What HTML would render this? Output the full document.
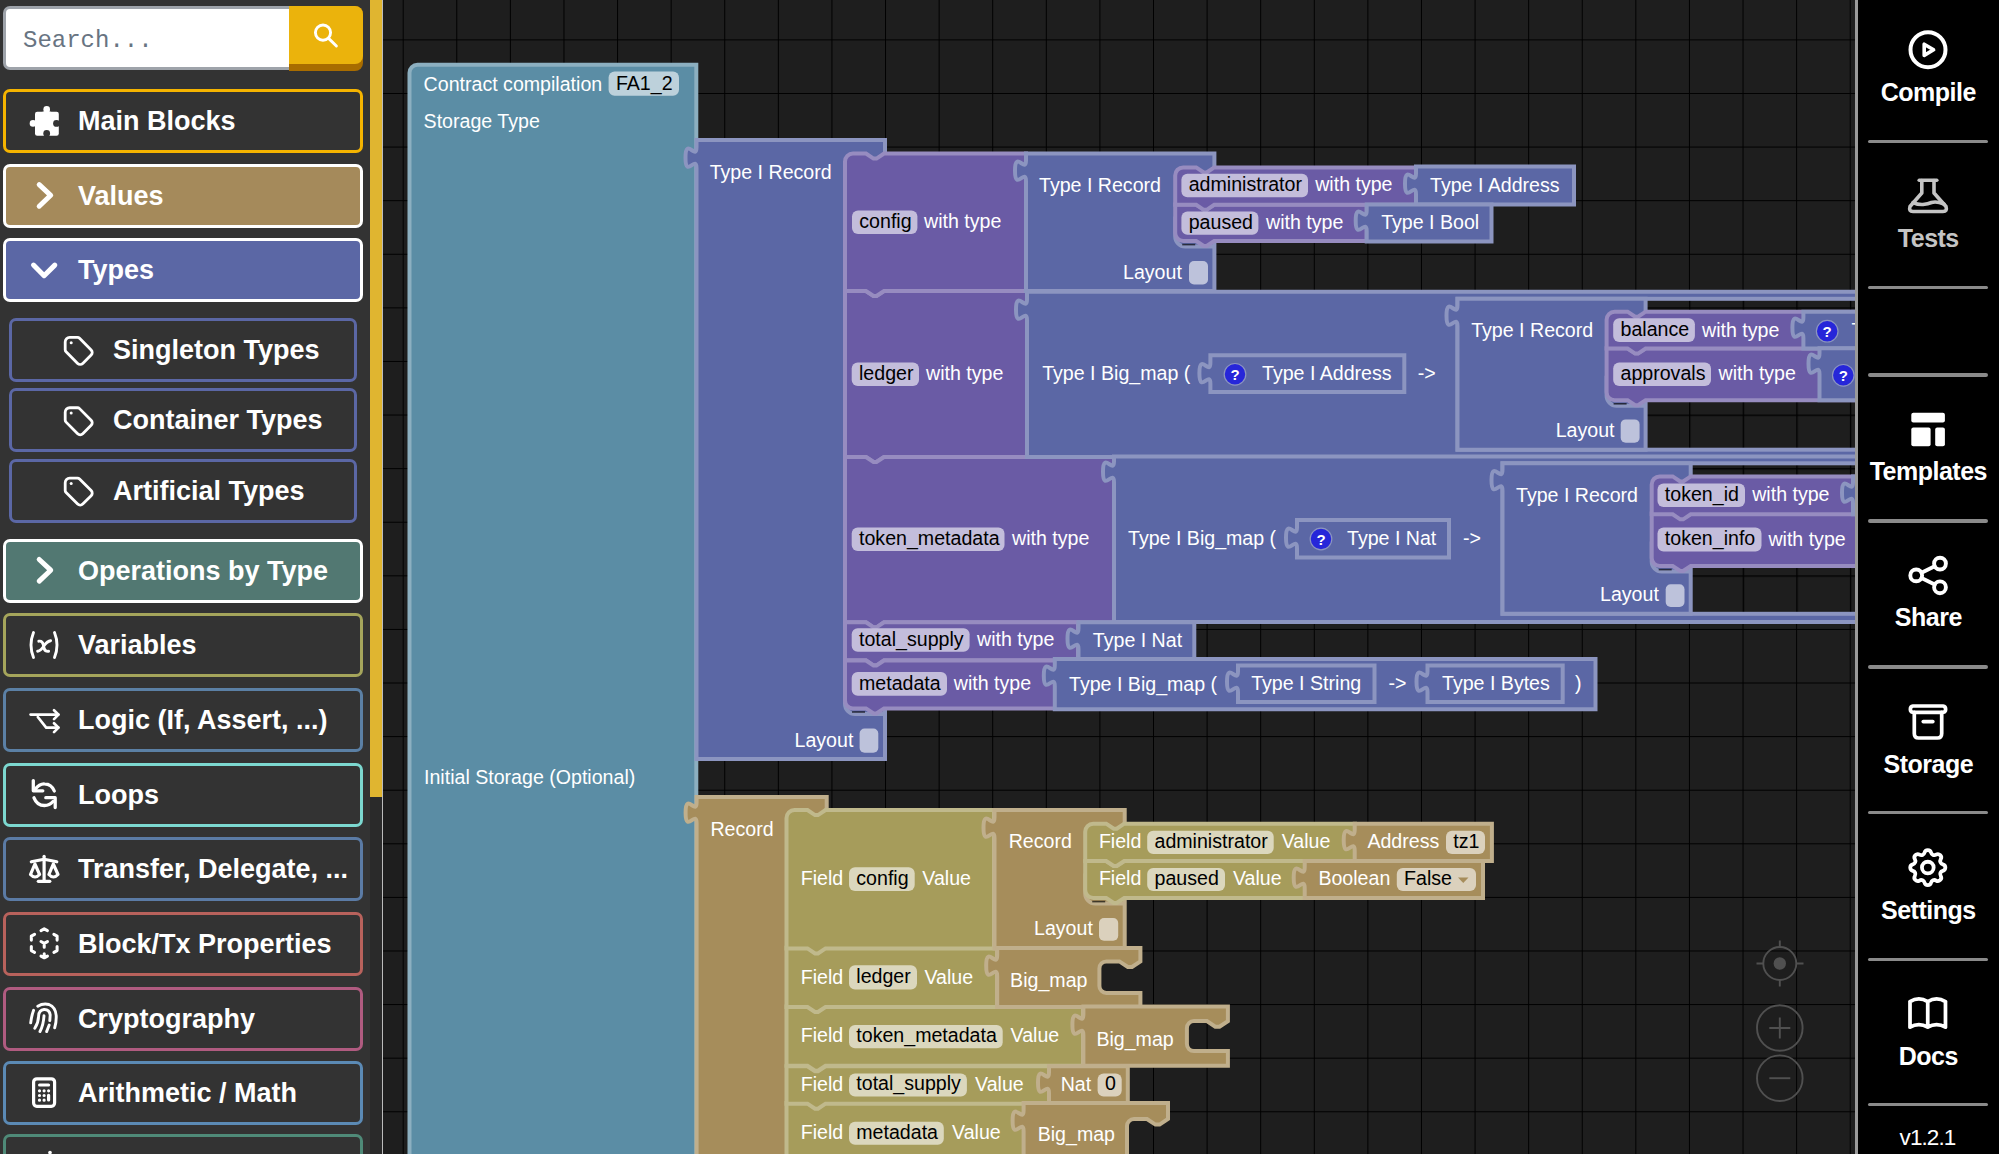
<!DOCTYPE html>
<html><head><meta charset="utf-8">
<style>
*{box-sizing:border-box;margin:0;padding:0}
html,body{width:1999px;height:1154px;overflow:hidden;background:#1e1e1e;font-family:"Liberation Sans",sans-serif}
#ws{position:absolute;left:383px;top:0;width:1473px;height:1154px;background-color:#1e1e1e;
 background-image:linear-gradient(to right,#000 0,#000 1.3px,transparent 1.3px),linear-gradient(to bottom,#000 0,#000 1.3px,transparent 1.3px);
 background-size:53.6px 53.6px;background-position:19.7px 39.4px}
#side{position:absolute;left:0;top:0;width:370px;height:1154px;background:#333}
#sbar{position:absolute;left:370px;top:0;width:12px;height:1154px;background:#2a2a2a}
#sthumb{position:absolute;left:370px;top:0;width:12px;height:796.5px;background:#e0b530}
#sline{position:absolute;left:382px;top:0;width:1px;height:1154px;background:#bbb}
.item{position:absolute;left:3px;width:360px;height:64px;border:3px solid #fff;border-radius:7px;color:#fff;font-weight:700;font-size:27px}
.item .lbl{position:absolute;left:72px;top:14px;white-space:nowrap}
.item .ic{position:absolute;left:24px;top:14px;width:34px;height:34px}
.sub{left:9px;width:348px;border-width:3px}
.sub .lbl{left:101px}
.sub .ic{left:52px}
#right{position:absolute;left:1855px;top:0;width:144px;height:1154px;background:#000;border-left:3px solid #9a9a9a}
.rb{position:absolute;left:0;width:141px;color:#fff;font-weight:700;font-size:23.8px;text-align:center}
.rdiv{position:absolute;left:10px;width:120px;height:3.5px;background:#8a8a8a;border-radius:2px}
.blk{position:absolute}
.t{position:absolute;color:#fff;font-size:19.5px;white-space:nowrap;line-height:1}
.f{position:absolute;height:24px;border-radius:6px;color:#000;font-size:19.5px;line-height:24px;padding:0 7px;white-space:nowrap}
</style></head><body>
<div id="ws"></div>
<!--BLOCKS--><svg id="blocks" style="position:absolute;left:0;top:0" width="1856" height="1154" font-family="Liberation Sans, sans-serif"><defs><pattern id="grid" patternUnits="userSpaceOnUse" x="402.7" y="39.4" width="53.6" height="53.6"><rect width="53.6" height="53.6" fill="#1e1e1e"/><rect width="1.3" height="53.6" fill="#000"/><rect width="53.6" height="1.3" fill="#000"/></pattern></defs>
<path d="M409.5 72.8a8 8 0 0 1 8 -8L696.3 64.8L696.3 1168L409.5 1168Z" fill="#5b8da5" stroke="#8cafc0" stroke-width="4.0"/>
<text x="423.6" y="91" fill="#fff" font-size="19.6" font-weight="400">Contract compilation</text>
<rect x="608.6" y="71.5" width="70.4" height="24.2" rx="6" fill="#bdd1db"/>
<text x="615.9" y="89.5" fill="#000" font-size="19.6">FA1_2</text>
<text x="423.6" y="127.8" fill="#fff" font-size="19.6" font-weight="400">Storage Type</text>
<text x="424" y="784.3" fill="#fff" font-size="19.6" font-weight="400">Initial Storage (Optional)</text>
<path d="M696.5 140.1L885 140.1L885 759.1L696.5 759.1L696.5 168.2c0 -14 -11 11 -11 -10.5s11 3.5 11 -10.5Z" fill="#5b67a5" stroke="#8c95c0" stroke-width="4.0"/>
<text x="709.7" y="179" fill="#fff" font-size="19.6" font-weight="400">Type I Record</text>
<text x="794.5" y="747" fill="#fff" font-size="19.6" font-weight="400">Layout</text>
<rect x="859.6" y="728.5" width="18.7" height="24.3" rx="5" fill="#bdc2db"/>
<path d="M845 291L866 291l7.5 5l3 0l7.5 -5L1027.5 291L1027.5 457L884 457l-7.5 5l-3 0l-7.5 -5L845 457Z" fill="#6a5ba5" stroke="#978cc0" stroke-width="4.0"/>
<path d="M845 457L866 457l7.5 5l3 0l7.5 -5L1114.4 457L1114.4 622.3L884 622.3l-7.5 5l-3 0l-7.5 -5L845 622.3Z" fill="#6a5ba5" stroke="#978cc0" stroke-width="4.0"/>
<path d="M845 622.3L866 622.3l7.5 5l3 0l7.5 -5L1078 622.3L1078 660.3L884 660.3l-7.5 5l-3 0l-7.5 -5L845 660.3Z" fill="#6a5ba5" stroke="#978cc0" stroke-width="4.0"/>
<path d="M845 684L845 704a10 10 0 0 0 10 10L885 714" fill="none" stroke="#8c95c0" stroke-width="4.0"/>
<path d="M852 712L865 712" stroke="rgba(0,0,0,0.65)" stroke-width="1.6"/>
<path d="M845 660.6L866 660.6l7.5 5l3 0l7.5 -5L1055 660.6L1055 708.4L884 708.4l-7.5 5l-3 0l-7.5 -5L853 708.4a8 8 0 0 1 -8 -8Z" fill="#6a5ba5" stroke="#978cc0" stroke-width="4.0"/>
<path d="M845 161.6a8 8 0 0 1 8 -8L866 153.6l7.5 5l3 0l7.5 -5L1026 153.6L1026 291L884 291l-7.5 5l-3 0l-7.5 -5L845 291Z" fill="#6a5ba5" stroke="#978cc0" stroke-width="4.0"/>
<rect x="852" y="210.4" width="65.4" height="23.6" rx="6" fill="#c3bddb"/>
<text x="859.3" y="227.8" fill="#000" font-size="19.6">config</text>
<text x="924" y="228" fill="#fff" font-size="19.6" font-weight="400">with type</text>
<rect x="851.7" y="362.5" width="67.3" height="23.5" rx="6" fill="#c3bddb"/>
<text x="859" y="379.8" fill="#000" font-size="19.6">ledger</text>
<text x="926" y="380" fill="#fff" font-size="19.6" font-weight="400">with type</text>
<rect x="851.7" y="527.5" width="152.8" height="23.5" rx="6" fill="#c3bddb"/>
<text x="859" y="544.8" fill="#000" font-size="19.6">token_metadata</text>
<text x="1012" y="545" fill="#fff" font-size="19.6" font-weight="400">with type</text>
<rect x="851.7" y="628.2" width="117.9" height="23.6" rx="6" fill="#c3bddb"/>
<text x="859" y="645.6" fill="#000" font-size="19.6">total_supply</text>
<text x="977" y="646.2" fill="#fff" font-size="19.6" font-weight="400">with type</text>
<rect x="851.7" y="672" width="95.3" height="23.8" rx="6" fill="#c3bddb"/>
<text x="859" y="689.6" fill="#000" font-size="19.6">metadata</text>
<text x="953.8" y="690" fill="#fff" font-size="19.6" font-weight="400">with type</text>
<path d="M1026 153.6L1214.4 153.6L1214.4 291L1026 291L1026 181.2c0 -14 -11 11 -11 -10.5s11 3.5 11 -10.5Z" fill="#5b67a5" stroke="#8c95c0" stroke-width="4.0"/>
<text x="1039" y="192.4" fill="#fff" font-size="19.6" font-weight="400">Type I Record</text>
<text x="1123" y="279" fill="#fff" font-size="19.6" font-weight="400">Layout</text>
<rect x="1189" y="261" width="19" height="23.4" rx="5" fill="#bdc2db"/>
<path d="M1175.2 216.6L1175.2 236.6a10 10 0 0 0 10 10L1214.4 246.6" fill="none" stroke="#8c95c0" stroke-width="4.0"/>
<path d="M1182.2 244.6L1195.2 244.6" stroke="rgba(0,0,0,0.65)" stroke-width="1.6"/>
<path d="M1175.2 204.6L1196.2 204.6l7.5 5l3 0l7.5 -5L1366.7 204.6L1366.7 241L1214.2 241l-7.5 5l-3 0l-7.5 -5L1183.2 241a8 8 0 0 1 -8 -8Z" fill="#6a5ba5" stroke="#978cc0" stroke-width="4.0"/>
<path d="M1175.2 175.4a8 8 0 0 1 8 -8L1196.2 167.4l7.5 5l3 0l7.5 -5L1416 167.4L1416 204.8L1214.2 204.8l-7.5 5l-3 0l-7.5 -5L1175.2 204.8Z" fill="#6a5ba5" stroke="#978cc0" stroke-width="4.0"/>
<path d="M1416 166.6L1574 166.6L1574 204.5L1416 204.5L1416 194.2c0 -14 -11 11 -11 -10.5s11 3.5 11 -10.5Z" fill="#5b67a5" stroke="#8c95c0" stroke-width="4.0"/>
<path d="M1366.7 204.6L1491.5 204.6L1491.5 241.5L1366.7 241.5L1366.7 231.2c0 -14 -11 11 -11 -10.5s11 3.5 11 -10.5Z" fill="#5b67a5" stroke="#8c95c0" stroke-width="4.0"/>
<rect x="1181.4" y="173.8" width="126.6" height="23.5" rx="6" fill="#c3bddb"/>
<text x="1188.7" y="191.1" fill="#000" font-size="19.6">administrator</text>
<text x="1315.2" y="191.4" fill="#fff" font-size="19.6" font-weight="400">with type</text>
<text x="1430" y="191.8" fill="#fff" font-size="19.6" font-weight="400">Type I Address</text>
<rect x="1181.4" y="211.6" width="77" height="23.1" rx="6" fill="#c3bddb"/>
<text x="1188.7" y="228.5" fill="#000" font-size="19.6">paused</text>
<text x="1266" y="228.6" fill="#fff" font-size="19.6" font-weight="400">with type</text>
<text x="1381.2" y="228.6" fill="#fff" font-size="19.6" font-weight="400">Type I Bool</text>
<path d="M1027 291.7L1878 291.7L1878 457L1027 457L1027 320.2c0 -14 -11 11 -11 -10.5s11 3.5 11 -10.5Z" fill="#5b67a5" stroke="#8c95c0" stroke-width="4.0"/>
<text x="1042.2" y="380.1" fill="#fff" font-size="19.6" font-weight="400">Type I Big_map (</text>
<path d="M1210.4 355.2L1404.3 355.2L1404.3 391.9L1210.4 391.9L1210.4 383.7c0 -14 -11 11 -11 -10.5s11 3.5 11 -10.5Z" fill="#5b67a5" stroke="#8c95c0" stroke-width="4.0"/>
<circle cx="1235" cy="374.3" r="10.8" fill="#2626d9" stroke="#8c95c0" stroke-width="1.2"/>
<text x="1235" y="379.8" fill="#fff" font-size="15" font-weight="700" text-anchor="middle">?</text>
<text x="1262" y="380" fill="#fff" font-size="19.6" font-weight="400">Type I Address</text>
<text x="1417.8" y="380" fill="#fff" font-size="19.6" font-weight="400">-&gt;</text>
<rect x="1457.5" y="298.8" width="440.5" height="150.9" fill="url(#grid)" stroke="#8c95c0" stroke-width="4.0"/>
<path d="M1457.5 298.8L1645.6 298.8L1645.6 449.7L1457.5 449.7L1457.5 326.2c0 -14 -11 11 -11 -10.5s11 3.5 11 -10.5Z" fill="#5b67a5" stroke="#8c95c0" stroke-width="4.0"/>
<text x="1471.2" y="336.6" fill="#fff" font-size="19.6" font-weight="400">Type I Record</text>
<text x="1555.7" y="436.6" fill="#fff" font-size="19.6" font-weight="400">Layout</text>
<rect x="1620.7" y="419.4" width="18.9" height="23.3" rx="5" fill="#bdc2db"/>
<path d="M1606.6 375.8L1606.6 395.8a10 10 0 0 0 10 10L1645.6 405.8" fill="none" stroke="#8c95c0" stroke-width="4.0"/>
<path d="M1613.6 403.8L1626.6 403.8" stroke="rgba(0,0,0,0.65)" stroke-width="1.6"/>
<path d="M1606.6 348.3L1627.6 348.3l7.5 5l3 0l7.5 -5L1878 348.3L1878 400.2L1645.6 400.2l-7.5 5l-3 0l-7.5 -5L1614.6 400.2a8 8 0 0 1 -8 -8Z" fill="#6a5ba5" stroke="#978cc0" stroke-width="4.0"/>
<path d="M1606.6 319.7a8 8 0 0 1 8 -8L1627.6 311.7l7.5 5l3 0l7.5 -5L1878 311.7L1878 348.6L1645.6 348.6l-7.5 5l-3 0l-7.5 -5L1606.6 348.6Z" fill="#6a5ba5" stroke="#978cc0" stroke-width="4.0"/>
<path d="M1803.4 311.7L1878 311.7L1878 348.6L1803.4 348.6L1803.4 338.2c0 -14 -11 11 -11 -10.5s11 3.5 11 -10.5Z" fill="#5b67a5" stroke="#8c95c0" stroke-width="4.0"/>
<path d="M1819.5 348.3L1878 348.3L1878 400.2L1819.5 400.2L1819.5 374.2c0 -14 -11 11 -11 -10.5s11 3.5 11 -10.5Z" fill="#5b67a5" stroke="#8c95c0" stroke-width="4.0"/>
<rect x="1613.2" y="318.3" width="81.7" height="23.7" rx="6" fill="#c3bddb"/>
<text x="1620.5" y="335.8" fill="#000" font-size="19.6">balance</text>
<text x="1702" y="336.6" fill="#fff" font-size="19.6" font-weight="400">with type</text>
<rect x="1613.2" y="362.4" width="97.8" height="23.7" rx="6" fill="#c3bddb"/>
<text x="1620.5" y="379.9" fill="#000" font-size="19.6">approvals</text>
<text x="1718.6" y="380.3" fill="#fff" font-size="19.6" font-weight="400">with type</text>
<circle cx="1827.2" cy="331.2" r="10.8" fill="#2626d9" stroke="#8c95c0" stroke-width="1.2"/>
<text x="1827.2" y="336.7" fill="#fff" font-size="15" font-weight="700" text-anchor="middle">?</text>
<text x="1851.5" y="336.6" fill="#fff" font-size="19.6" font-weight="400">Type</text>
<circle cx="1843.3" cy="375.3" r="10.8" fill="#2626d9" stroke="#8c95c0" stroke-width="1.2"/>
<text x="1843.3" y="380.8" fill="#fff" font-size="15" font-weight="700" text-anchor="middle">?</text>
<path d="M1114 456.4L1878 456.4L1878 622L1114 622L1114 482.2c0 -14 -11 11 -11 -10.5s11 3.5 11 -10.5Z" fill="#5b67a5" stroke="#8c95c0" stroke-width="4.0"/>
<text x="1128" y="545" fill="#fff" font-size="19.6" font-weight="400">Type I Big_map (</text>
<path d="M1297 520L1449 520L1449 557.6L1297 557.6L1297 548.2c0 -14 -11 11 -11 -10.5s11 3.5 11 -10.5Z" fill="#5b67a5" stroke="#8c95c0" stroke-width="4.0"/>
<circle cx="1321" cy="539" r="10.8" fill="#2626d9" stroke="#8c95c0" stroke-width="1.2"/>
<text x="1321" y="544.5" fill="#fff" font-size="15" font-weight="700" text-anchor="middle">?</text>
<text x="1347" y="545" fill="#fff" font-size="19.6" font-weight="400">Type I Nat</text>
<text x="1463" y="545" fill="#fff" font-size="19.6" font-weight="400">-&gt;</text>
<rect x="1502.5" y="463.3" width="395.5" height="150.5" fill="url(#grid)" stroke="#8c95c0" stroke-width="4.0"/>
<path d="M1502.5 463.3L1690.7 463.3L1690.7 613.8L1502.5 613.8L1502.5 490.7c0 -14 -11 11 -11 -10.5s11 3.5 11 -10.5Z" fill="#5b67a5" stroke="#8c95c0" stroke-width="4.0"/>
<text x="1516" y="501.7" fill="#fff" font-size="19.6" font-weight="400">Type I Record</text>
<text x="1600" y="601.2" fill="#fff" font-size="19.6" font-weight="400">Layout</text>
<rect x="1665.7" y="584.2" width="18.8" height="22.8" rx="5" fill="#bdc2db"/>
<path d="M1651.7 541.6L1651.7 561.6a10 10 0 0 0 10 10L1690.7 571.6" fill="none" stroke="#8c95c0" stroke-width="4.0"/>
<path d="M1658.7 569.6L1671.7 569.6" stroke="rgba(0,0,0,0.65)" stroke-width="1.6"/>
<path d="M1651.7 513.5L1672.7 513.5l7.5 5l3 0l7.5 -5L1878 513.5L1878 566L1690.7 566l-7.5 5l-3 0l-7.5 -5L1659.7 566a8 8 0 0 1 -8 -8Z" fill="#6a5ba5" stroke="#978cc0" stroke-width="4.0"/>
<path d="M1651.7 484.4a8 8 0 0 1 8 -8L1672.7 476.4l7.5 5l3 0l7.5 -5L1878 476.4L1878 514.3L1690.7 514.3l-7.5 5l-3 0l-7.5 -5L1651.7 514.3Z" fill="#6a5ba5" stroke="#978cc0" stroke-width="4.0"/>
<path d="M1853 476.4L1878 476.4L1878 514.3L1853 514.3L1853 503.2c0 -14 -11 11 -11 -10.5s11 3.5 11 -10.5Z" fill="#5b67a5" stroke="#8c95c0" stroke-width="4.0"/>
<rect x="1657.5" y="483.6" width="87.5" height="23.4" rx="6" fill="#c3bddb"/>
<text x="1664.8" y="500.8" fill="#000" font-size="19.6">token_id</text>
<text x="1752.2" y="501.1" fill="#fff" font-size="19.6" font-weight="400">with type</text>
<rect x="1657.5" y="527.6" width="104" height="23.8" rx="6" fill="#c3bddb"/>
<text x="1664.8" y="545.2" fill="#000" font-size="19.6">token_info</text>
<text x="1768.4" y="545.6" fill="#fff" font-size="19.6" font-weight="400">with type</text>
<path d="M1078.5 622.3L1194.3 622.3L1194.3 659.5L1078.5 659.5L1078.5 649.2c0 -14 -11 11 -11 -10.5s11 3.5 11 -10.5Z" fill="#5b67a5" stroke="#8c95c0" stroke-width="4.0"/>
<text x="1092.8" y="646.5" fill="#fff" font-size="19.6" font-weight="400">Type I Nat</text>
<path d="M1054.8 659L1595.5 659L1595.5 709.2L1054.8 709.2L1054.8 686.2c0 -14 -11 11 -11 -10.5s11 3.5 11 -10.5Z" fill="#5b67a5" stroke="#8c95c0" stroke-width="4.0"/>
<text x="1069" y="690.8" fill="#fff" font-size="19.6" font-weight="400">Type I Big_map (</text>
<path d="M1238 665.6L1374.5 665.6L1374.5 702.1L1238 702.1L1238 692.2c0 -14 -11 11 -11 -10.5s11 3.5 11 -10.5Z" fill="#5b67a5" stroke="#8c95c0" stroke-width="4.0"/>
<text x="1251.2" y="690.4" fill="#fff" font-size="19.6" font-weight="400">Type I String</text>
<text x="1388.4" y="690.4" fill="#fff" font-size="19.6" font-weight="400">-&gt;</text>
<path d="M1427.5 665.6L1562.7 665.6L1562.7 702.1L1427.5 702.1L1427.5 692.2c0 -14 -11 11 -11 -10.5s11 3.5 11 -10.5Z" fill="#5b67a5" stroke="#8c95c0" stroke-width="4.0"/>
<text x="1442" y="690.4" fill="#fff" font-size="19.6" font-weight="400">Type I Bytes</text>
<text x="1575" y="690.4" fill="#fff" font-size="19.6" font-weight="400">)</text>
<path d="M696.6 797L826.7 797L826.7 1168L696.6 1168L696.6 823.2c0 -14 -11 11 -11 -10.5s11 3.5 11 -10.5Z" fill="#a68d5b" stroke="#c0af8c" stroke-width="4.0"/>
<text x="710.4" y="835.5" fill="#fff" font-size="19.6" font-weight="400">Record</text>
<path d="M786.5 1103L807.5 1103l7.5 5l3 0l7.5 -5L1024 1103L1024 1168L786.5 1168Z" fill="#a69c5b" stroke="#c0b98c" stroke-width="4.0"/>
<path d="M786.5 1066.3L807.5 1066.3l7.5 5l3 0l7.5 -5L1049 1066.3L1049 1103.7L825.5 1103.7l-7.5 5l-3 0l-7.5 -5L786.5 1103.7Z" fill="#a69c5b" stroke="#c0b98c" stroke-width="4.0"/>
<path d="M786.5 1006.4L807.5 1006.4l7.5 5l3 0l7.5 -5L1083 1006.4L1083 1065.7L825.5 1065.7l-7.5 5l-3 0l-7.5 -5L786.5 1065.7Z" fill="#a69c5b" stroke="#c0b98c" stroke-width="4.0"/>
<path d="M786.5 947.8L807.5 947.8l7.5 5l3 0l7.5 -5L997 947.8L997 1007L825.5 1007l-7.5 5l-3 0l-7.5 -5L786.5 1007Z" fill="#a69c5b" stroke="#c0b98c" stroke-width="4.0"/>
<path d="M786.5 818.1a8 8 0 0 1 8 -8L807.5 810.1l7.5 5l3 0l7.5 -5L994 810.1L994 948.4L825.5 948.4l-7.5 5l-3 0l-7.5 -5L786.5 948.4Z" fill="#a69c5b" stroke="#c0b98c" stroke-width="4.0"/>
<text x="800.7" y="884.6" fill="#fff" font-size="19.6" font-weight="400">Field</text>
<rect x="849" y="867.2" width="65.7" height="23.8" rx="6" fill="#dbd7bd"/>
<text x="856.3" y="884.8" fill="#000" font-size="19.6">config</text>
<text x="922.3" y="884.6" fill="#fff" font-size="19.6" font-weight="400">Value</text>
<text x="800.7" y="983.7" fill="#fff" font-size="19.6" font-weight="400">Field</text>
<rect x="849" y="965.3" width="68" height="24.2" rx="6" fill="#dbd7bd"/>
<text x="856.3" y="983.3" fill="#000" font-size="19.6">ledger</text>
<text x="924.5" y="983.7" fill="#fff" font-size="19.6" font-weight="400">Value</text>
<text x="800.7" y="1042.4" fill="#fff" font-size="19.6" font-weight="400">Field</text>
<rect x="849" y="1025.1" width="153.7" height="23.1" rx="6" fill="#dbd7bd"/>
<text x="856.3" y="1042" fill="#000" font-size="19.6">token_metadata</text>
<text x="1010.6" y="1042.4" fill="#fff" font-size="19.6" font-weight="400">Value</text>
<text x="800.7" y="1090.7" fill="#fff" font-size="19.6" font-weight="400">Field</text>
<rect x="849" y="1073.5" width="117.9" height="23" rx="6" fill="#dbd7bd"/>
<text x="856.3" y="1090.3" fill="#000" font-size="19.6">total_supply</text>
<text x="975.1" y="1090.7" fill="#fff" font-size="19.6" font-weight="400">Value</text>
<text x="800.7" y="1139" fill="#fff" font-size="19.6" font-weight="400">Field</text>
<rect x="849" y="1121.8" width="94.8" height="23" rx="6" fill="#dbd7bd"/>
<text x="856.3" y="1138.6" fill="#000" font-size="19.6">metadata</text>
<text x="952.1" y="1139" fill="#fff" font-size="19.6" font-weight="400">Value</text>
<path d="M994.5 810.1L1124.7 810.1L1124.7 948.4L994.5 948.4L994.5 838.2c0 -14 -11 11 -11 -10.5s11 3.5 11 -10.5Z" fill="#a68d5b" stroke="#c0af8c" stroke-width="4.0"/>
<text x="1008.7" y="848.3" fill="#fff" font-size="19.6" font-weight="400">Record</text>
<text x="1034" y="935" fill="#fff" font-size="19.6" font-weight="400">Layout</text>
<rect x="1099" y="918" width="19.2" height="22.8" rx="5" fill="#dbd1bd"/>
<path d="M1085.2 873.6L1085.2 893.6a10 10 0 0 0 10 10L1124.7 903.6" fill="none" stroke="#c0af8c" stroke-width="4.0"/>
<path d="M1092.2 901.6L1105.2 901.6" stroke="rgba(0,0,0,0.65)" stroke-width="1.6"/>
<path d="M1085.2 861L1106.2 861l7.5 5l3 0l7.5 -5L1305 861L1305 898L1124.2 898l-7.5 5l-3 0l-7.5 -5L1093.2 898a8 8 0 0 1 -8 -8Z" fill="#a69c5b" stroke="#c0b98c" stroke-width="4.0"/>
<path d="M1085.2 831.7a8 8 0 0 1 8 -8L1106.2 823.7l7.5 5l3 0l7.5 -5L1355 823.7L1355 861L1124.2 861l-7.5 5l-3 0l-7.5 -5L1085.2 861Z" fill="#a69c5b" stroke="#c0b98c" stroke-width="4.0"/>
<path d="M1354.7 823.7L1491.9 823.7L1491.9 861L1354.7 861L1354.7 850.7c0 -14 -11 11 -11 -10.5s11 3.5 11 -10.5Z" fill="#a68d5b" stroke="#c0af8c" stroke-width="4.0"/>
<path d="M1304.7 861L1483 861L1483 898L1304.7 898L1304.7 888.2c0 -14 -11 11 -11 -10.5s11 3.5 11 -10.5Z" fill="#a68d5b" stroke="#c0af8c" stroke-width="4.0"/>
<text x="1098.9" y="848.2" fill="#fff" font-size="19.6" font-weight="400">Field</text>
<rect x="1147.2" y="830.8" width="126.5" height="23.1" rx="6" fill="#dbd7bd"/>
<text x="1154.5" y="847.7" fill="#000" font-size="19.6">administrator</text>
<text x="1281.7" y="848.2" fill="#fff" font-size="19.6" font-weight="400">Value</text>
<text x="1367.4" y="848.2" fill="#fff" font-size="19.6" font-weight="400">Address</text>
<rect x="1446" y="830.8" width="39" height="23.1" rx="6" fill="#dbd1bd"/>
<text x="1453.3" y="847.7" fill="#000" font-size="19.6">tz1</text>
<text x="1098.9" y="885.4" fill="#fff" font-size="19.6" font-weight="400">Field</text>
<rect x="1147.2" y="868" width="77.8" height="23" rx="6" fill="#dbd7bd"/>
<text x="1154.5" y="884.8" fill="#000" font-size="19.6">paused</text>
<text x="1233" y="885.4" fill="#fff" font-size="19.6" font-weight="400">Value</text>
<text x="1318.4" y="885.4" fill="#fff" font-size="19.6" font-weight="400">Boolean</text>
<rect x="1396.8" y="868" width="79.2" height="23" rx="6" fill="#dbd1bd"/>
<text x="1404.1" y="884.8" fill="#000" font-size="19.6">False</text>
<path d="M1458 877.5h10.5l-5.25 5.5z" fill="#a68d5b"/>
<path d="M997.2 948L1140.4 948L1140.4 961.4L1132 967L1127.8 967L1119.4 961.4L1106.4 961.4a7 7 0 0 0 -7 7L1099.4 986a7 7 0 0 0 7 7L1140.4 993L1140.4 1007L997.2 1007L997.2 976.2c0 -14 -11 11 -11 -10.5s11 3.5 11 -10.5Z" fill="#a68d5b" stroke="#c0af8c" stroke-width="4.0"/>
<text x="1010.1" y="987.2" fill="#fff" font-size="19.6" font-weight="400">Big_map</text>
<path d="M1083.4 1006.4L1227.9 1006.4L1227.9 1021.1L1219.5 1026.7L1215.3 1026.7L1206.9 1021.1L1193.9 1021.1a7 7 0 0 0 -7 7L1186.9 1044.1a7 7 0 0 0 7 7L1227.9 1051.1L1227.9 1065.7L1083.4 1065.7L1083.4 1035.2c0 -14 -11 11 -11 -10.5s11 3.5 11 -10.5Z" fill="#a68d5b" stroke="#c0af8c" stroke-width="4.0"/>
<text x="1096.4" y="1045.9" fill="#fff" font-size="19.6" font-weight="400">Big_map</text>
<path d="M1049 1066.3L1127.8 1066.3L1127.8 1103.7L1049 1103.7L1049 1093.2c0 -14 -11 11 -11 -10.5s11 3.5 11 -10.5Z" fill="#a68d5b" stroke="#c0af8c" stroke-width="4.0"/>
<text x="1060.7" y="1090.7" fill="#fff" font-size="19.6" font-weight="400">Nat</text>
<rect x="1097.6" y="1073.5" width="24.1" height="23" rx="6" fill="#dbd1bd"/>
<text x="1104.9" y="1090.3" fill="#000" font-size="19.6">0</text>
<path d="M1023.6 1103L1168 1103L1168 1119L1159.6 1124.6L1155.4 1124.6L1147 1119L1134 1119a7 7 0 0 0 -7 7L1127 1193a7 7 0 0 0 7 7L1168 1200L1168 1168L1023.6 1168L1023.6 1131.2c0 -14 -11 11 -11 -10.5s11 3.5 11 -10.5Z" fill="#a68d5b" stroke="#c0af8c" stroke-width="4.0"/>
<text x="1037.7" y="1141.3" fill="#fff" font-size="19.6" font-weight="400">Big_map</text>
<g fill="none" stroke="#505050" stroke-width="1.9"><circle cx="1779.8" cy="963.5" r="16.5"/><path d="M1779.8 940.5v7M1779.8 979.5v7M1756.5 963.5h7M1796.5 963.5h7"/><circle cx="1779.8" cy="1028" r="22.8"/><path d="M1769.3 1028h21M1779.8 1017.5v21"/><circle cx="1779.8" cy="1078.2" r="22.8"/><path d="M1769.3 1078.2h21"/></g>
<circle cx="1779.8" cy="963.5" r="6.2" fill="#505050"/></svg><!--/BLOCKS-->
<div id="side">
  <div style="position:absolute;left:3px;top:6px;width:290px;height:64px;background:#fff;border:3px solid #9ea3aa;border-right:none;border-radius:7px 0 0 7px"></div>
  <div style="position:absolute;left:23px;top:26.5px;font-family:'Liberation Mono',monospace;font-size:24px;color:#687482">Search...</div>
  <div style="position:absolute;left:289px;top:6px;width:74px;height:65px;background:#a86c00;border-radius:0 8px 8px 0"></div>
  <div style="position:absolute;left:289px;top:6px;width:74px;height:58px;background:#ebb30c;border-radius:0 8px 8px 0"></div>
<div class="item" style="top:89px;border-color:#f5b400;background:#333"><div class="ic ic-puzzle"></div><div class="lbl">Main Blocks</div></div>
<div class="item" style="top:163.7px;border-color:#fff;background:#a58a5b"><div class="ic ic-chevr"></div><div class="lbl">Values</div></div>
<div class="item" style="top:238.3px;border-color:#fff;background:#5b67a5"><div class="ic ic-chevd"></div><div class="lbl">Types</div></div>
<div class="item sub" style="top:318px;border-color:#5b67a5;background:#333"><div class="ic ic-tag"></div><div class="lbl">Singleton Types</div></div>
<div class="item sub" style="top:388.3px;border-color:#5b67a5;background:#333"><div class="ic ic-tag"></div><div class="lbl">Container Types</div></div>
<div class="item sub" style="top:458.7px;border-color:#5b67a5;background:#333"><div class="ic ic-tag"></div><div class="lbl">Artificial Types</div></div>
<div class="item" style="top:538.6px;border-color:#fff;background:#527872"><div class="ic ic-chevr"></div><div class="lbl">Operations by Type</div></div>
<div class="item" style="top:613.3px;border-color:#a5a55b;background:#333"><div class="ic ic-var"></div><div class="lbl">Variables</div></div>
<div class="item" style="top:688px;border-color:#5b80a5;background:#333"><div class="ic ic-logic"></div><div class="lbl">Logic (If, Assert, ...)</div></div>
<div class="item" style="top:762.7px;border-color:#7cd8d0;background:#333"><div class="ic ic-loop"></div><div class="lbl">Loops</div></div>
<div class="item" style="top:837.3px;border-color:#5b7ba5;background:#333"><div class="ic ic-scale"></div><div class="lbl">Transfer, Delegate, ...</div></div>
<div class="item" style="top:912px;border-color:#b8625c;background:#333"><div class="ic ic-cube"></div><div class="lbl">Block/Tx Properties</div></div>
<div class="item" style="top:986.6px;border-color:#b05b80;background:#333"><div class="ic ic-finger"></div><div class="lbl">Cryptography</div></div>
<div class="item" style="top:1061.3px;border-color:#5b8ab5;background:#333"><div class="ic ic-calc"></div><div class="lbl">Arithmetic / Math</div></div>
<div class="item" style="top:1134px;border-color:#4f8a78;background:#333"><div class="ic ic-"></div><div class="lbl"></div></div>
</div>
<svg style="position:absolute;left:0;top:0" width="383" height="1154" fill="none" stroke="#fff" stroke-linecap="round" stroke-linejoin="round">
<!-- search -->
<g transform="translate(300,14)" stroke-width="2.9"><circle cx="23" cy="18.6" r="7.6"/><path d="M28.6 24.4L36.4 32"/></g>
<!-- puzzle -->
<g transform="translate(20,95)" fill="#fff" stroke="none"><rect x="15" y="16.7" width="23.8" height="24" rx="2.2"/><rect x="24.2" y="14" width="5" height="4"/><circle cx="26.7" cy="14.3" r="3.3"/><path d="M22 16.8Q24.2 16.8 24.2 14.5V16.8ZM31.4 16.8Q29.2 16.8 29.2 14.5V16.8Z"/><rect x="13" y="25.9" width="3" height="5"/><circle cx="13" cy="28.4" r="3.3"/><circle cx="36.5" cy="28.4" r="3.4" fill="#333"/><circle cx="26.7" cy="38.4" r="3.4" fill="#333"/></g>
<!-- chevrons -->
<path d="M39.2 184.6L50.7 195.3L39.2 206.2" stroke-width="5"/>
<path d="M33.5 265.1L44.1 275.7L54.8 265.1" stroke-width="5"/>
<path d="M39.2 559.5L50.7 570.2L39.2 581.1" stroke-width="5"/>
<!-- tags -->
<g id="tagi"><path stroke-width="1.87" transform="translate(60.7,332.95) scale(1.5)" d="M3 6v5.172a2 2 0 0 0 .586 1.414l7.71 7.71a2.41 2.41 0 0 0 3.408 0l5.592 -5.592a2.41 2.41 0 0 0 0 -3.408l-7.71 -7.71a2 2 0 0 0 -1.414 -.586h-5.172a3 3 0 0 0 -3 3z"/><circle cx="71.2" cy="342.8" r="1.5" fill="#fff" stroke="none"/></g>
<use href="#tagi" y="70.3"/><use href="#tagi" y="140.7"/>
<!-- variables -->
<g transform="translate(22,620)" stroke-width="2.9"><path d="M11.5 12.5Q6.5 25 11.5 37.5"/><path d="M32.5 12.5Q37.5 25 32.5 37.5"/><path d="M16.8 21.2Q20.3 20.5 21.2 24.5L22.3 29Q23.2 31.6 26.6 31.3"/><path d="M28.6 20.8Q25.5 21.2 22 25.6Q19 30.8 15.6 31.2"/></g>
<!-- logic -->
<g transform="translate(22,695)" stroke-width="2.7"><path d="M8.6 19.6H36.3"/><path d="M32 15.2L36.5 19.6L32 24.1"/><path d="M15.8 22L24.2 32.6H36.3"/><path d="M32 28.2L36.5 32.6L32 37.1"/></g>
<!-- loop -->
<g transform="translate(22,770)" stroke-width="3.3"><path d="M11.3 10.6V20.8H20.8"/><path d="M13 19.5Q17.5 13.5 22.5 13.8Q29.5 14 32.3 21"/><path d="M12 27.8Q15 35.5 22.5 35.5Q27.5 35.5 31 31.5"/><path d="M23.8 27.7H33.2V37.6"/></g>
<!-- scale -->
<g transform="translate(22,845)" stroke-width="3.2"><path d="M22.1 11.3V36"/><path d="M16.3 36.3H27.8"/><path d="M9.3 16.8L22.1 14.2L34.8 16.8"/><path d="M12.9 19L8.5 29.5Q13 34.5 17.6 29.5Z"/><path d="M31.3 19L26.9 29.5Q31.4 34.5 36 29.5Z"/></g>
<!-- cube -->
<g transform="translate(24.9,924) scale(1.61)" stroke-width="1.9"><path d="M6 17.6l-2 -1.1v-2.5M4 10v-2.5l2 -1.1M10 4.1l2 -1.1l2 1.1M18 6.4l2 1.1v2.5M20 14v2.5l-2 1.12M14 19.9l-2 1.1l-2 -1.1M12 12l2 -1.1M12 12l0 2.5M12 18.5v2.5M12 12l-2 -1.12"/></g>
<!-- fingerprint -->
<g transform="translate(22,993)" stroke-width="2.9"><path d="M8.7 29.8Q9.5 23 11.6 17.3"/><path d="M15.8 13.2Q21 10 27 11.5Q33.5 14 34.2 22.5Q34.5 29 32.7 34.8"/><path d="M12.8 35.3Q16.5 29.5 16.6 23Q17 16.8 22 16.5Q27.5 16.3 28.2 22L27.8 27.6"/><path d="M18 38.5Q21.5 31.8 22 22.8"/><path d="M24.6 38.6L27.2 32"/></g>
<circle cx="50" cy="1152.5" r="1.8" fill="#fff" stroke="none"/>
<!-- calculator -->
<g transform="translate(22,1067)"><rect x="11.6" y="11.8" width="21" height="27.5" rx="3.2" stroke-width="3.2"/><path d="M17.5 18H26.6" stroke-width="3"/><g stroke-width="3.2"><path d="M17.5 23.8v.01M22.1 23.8v.01M26.6 23.8v.01M17.5 28.5v.01M22.1 28.5v.01M17.5 33.2v.01M22.1 33.2v.01M26.6 28.3V33"/></g></g>
</svg>
<div id="sbar"></div><div id="sthumb"></div><div id="sline"></div>
<div id="right">
<div class="rdiv" style="top:139.5px"></div>
<div class="rdiv" style="top:285.5px"></div>
<div class="rdiv" style="top:373px"></div>
<div class="rdiv" style="top:519px"></div>
<div class="rdiv" style="top:665px"></div>
<div class="rdiv" style="top:810.5px"></div>
<div class="rdiv" style="top:957.5px"></div>
<div class="rdiv" style="top:1102.5px"></div>
</div>
<svg style="position:absolute;left:1856px;top:0" width="143" height="1154" fill="none" stroke="#fff" stroke-linecap="round" stroke-linejoin="round">
<g transform="translate(-1856,0)" font-family="Liberation Sans, sans-serif"><text x="1928.3" y="100.9" fill="#fff" stroke="none" font-size="25" font-weight="700" letter-spacing="-0.5" text-anchor="middle">Compile</text><text x="1928.3" y="246.8" fill="#c4c4c4" stroke="none" font-size="25" font-weight="700" letter-spacing="-0.5" text-anchor="middle">Tests</text><text x="1928.3" y="480" fill="#fff" stroke="none" font-size="25" font-weight="700" letter-spacing="-0.5" text-anchor="middle">Templates</text><text x="1928.3" y="626" fill="#fff" stroke="none" font-size="25" font-weight="700" letter-spacing="-0.5" text-anchor="middle">Share</text><text x="1928.3" y="772.5" fill="#fff" stroke="none" font-size="25" font-weight="700" letter-spacing="-0.5" text-anchor="middle">Storage</text><text x="1928.3" y="918.5" fill="#fff" stroke="none" font-size="25" font-weight="700" letter-spacing="-0.5" text-anchor="middle">Settings</text><text x="1928.3" y="1064.5" fill="#fff" stroke="none" font-size="25" font-weight="700" letter-spacing="-0.5" text-anchor="middle">Docs</text><text x="1927.5" y="1144.8" fill="#fff" stroke="none" font-size="22.5" letter-spacing="-0.9" text-anchor="middle">v1.2.1</text>
<circle cx="1928" cy="49.7" r="17.5" stroke-width="4"/>
<path d="M1924.2 44.2V55.4L1933.6 49.8Z" stroke-width="3.6"/>
<g transform="translate(1898,170)" stroke="#c4c4c4" stroke-width="3.6"><path d="M21.2 10.3H38.8"/><path d="M23.8 10.5V23L12 36.5Q10.5 41.5 15 41.5H45Q49.5 41.5 48 36.5L36 23V10.5"/><path d="M15 32.5Q20 34.8 25 34.5Q30 34 33.5 32.5Q38.5 31 46 34"/></g>
<g transform="translate(1898,405)" fill="#fff" stroke="none"><rect x="13.3" y="7.8" width="33.6" height="9.8" rx="2"/><rect x="13.3" y="22.4" width="19.3" height="18.8" rx="2"/><rect x="37.2" y="22.4" width="9.7" height="18.8" rx="2"/></g>
<g transform="translate(1898,550)" stroke-width="3.9"><circle cx="18.2" cy="25.4" r="5.9"/><circle cx="42" cy="13.6" r="5.9"/><circle cx="42" cy="37.3" r="5.9"/><path d="M23.5 22.7L36.7 16.3M23.5 28.1L36.7 34.6"/></g>
<g transform="translate(1898,695)" stroke-width="3.7"><path d="M15 11H45A3.2 3.2 0 0 1 45 17.3H15A3.2 3.2 0 0 1 15 11Z"/><path d="M16.3 17.3V38.5Q16.3 43 20.5 43H39.5Q43.7 43 43.7 38.5V17.3"/><path d="M25.3 26.6H34.8"/></g>
<g transform="translate(1904.4,844.2) scale(1.95)" stroke-width="1.95"><path d="M10.325 4.317c.426 -1.756 2.924 -1.756 3.35 0a1.724 1.724 0 0 0 2.573 1.066c1.543 -.94 3.31 .826 2.37 2.37a1.724 1.724 0 0 0 1.065 2.572c1.756 .426 1.756 2.924 0 3.35a1.724 1.724 0 0 0 -1.066 2.573c.94 1.543 -.826 3.31 -2.37 2.37a1.724 1.724 0 0 0 -2.572 1.065c-.426 1.756 -2.924 1.756 -3.35 0a1.724 1.724 0 0 0 -2.573 -1.066c-1.543 .94 -3.31 -.826 -2.37 -2.37a1.724 1.724 0 0 0 -1.065 -2.572c-1.756 -.426 -1.756 -2.924 0 -3.35a1.724 1.724 0 0 0 1.066 -2.573c-.94 -1.543 .826 -3.31 2.37 -2.37c1 .608 2.296 .07 2.572 -1.065z"/><path d="M9 12a3 3 0 1 0 6 0a3 3 0 0 0 -6 0"/></g>
<g transform="translate(1904.1,989.7) scale(1.97)" stroke-width="1.9"><path d="M3 19a9 9 0 0 1 9 0a9 9 0 0 1 9 0M3 6a9 9 0 0 1 9 0a9 9 0 0 1 9 0M3 6l0 13M12 6l0 13M21 6l0 13"/></g>
</g></svg>
</body></html>
